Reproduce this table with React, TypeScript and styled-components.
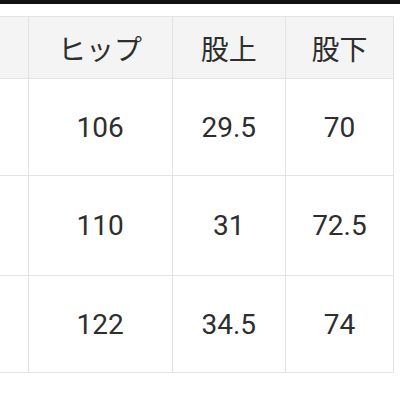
import styled, { createGlobalStyle } from 'styled-components';

const GlobalStyle = createGlobalStyle`
  html, body {
    margin: 0;
    padding: 0;
    background: #ffffff;
  }
  body {
    font-family: Roboto, "Noto Sans CJK JP", "Noto Sans", sans-serif;
  }
`;

const Page = styled.div`
  width: 400px;
  height: 400px;
  overflow: hidden;
  background: #ffffff;
`;

const TopBar = styled.div`
  height: 4px;
  background: #111111;
`;

const TableWrap = styled.div`
  padding-top: 12px;
`;

const SizeTable = styled.table`
  border-collapse: collapse;
  table-layout: fixed;
  width: 394px;
  color: #2e2e2e;
  font-size: 28px;
`;

const Cell = styled.td<{ $head?: boolean }>`
  border: 1px solid #e3e3e3;
  background: ${(p) => (p.$head ? '#f4f4f4' : '#ffffff')};
  text-align: center;
  vertical-align: middle;
  padding: 0;
  font-weight: 400;
  white-space: nowrap;
  overflow: hidden;

  &:first-child {
    border-left: none;
  }
`;

const Row = styled.tr<{ $h: number }>`
  height: ${(p) => p.$h}px;
`;

const headers = ['', 'ヒップ', '股上', '股下'];
const rows = [
  { h: 97, cells: ['', '106', '29.5', '70'] },
  { h: 100, cells: ['', '110', '31', '72.5'] },
  { h: 97, cells: ['', '122', '34.5', '74'] },
];

export default function App() {
  return (
    <Page>
      <GlobalStyle />
      <TopBar />
      <TableWrap>
        <SizeTable>
          <colgroup>
            <col style={{ width: 28 }} />
            <col style={{ width: 144 }} />
            <col style={{ width: 113 }} />
            <col style={{ width: 108 }} />
          </colgroup>
          <tbody>
            <Row $h={62}>
              {headers.map((t, i) => (
                <Cell key={i} $head>
                  {t}
                </Cell>
              ))}
            </Row>
            {rows.map((r, ri) => (
              <Row key={ri} $h={r.h}>
                {r.cells.map((c, ci) => (
                  <Cell key={ci}>{c}</Cell>
                ))}
              </Row>
            ))}
          </tbody>
        </SizeTable>
      </TableWrap>
    </Page>
  );
}
